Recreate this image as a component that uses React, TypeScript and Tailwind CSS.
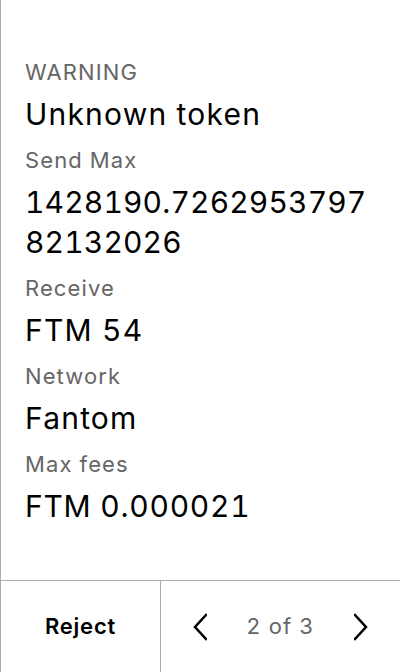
const rows = [
  { label: "WARNING", value: "Unknown token", track: "tracking-[0.04em]" },
  { label: "Send Max", value: "1428190.726295379782132026", track: "tracking-[0.005em]" },
  { label: "Receive", value: "FTM 54", track: "tracking-[0.04em]" },
  { label: "Network", value: "Fantom", track: "tracking-[0.04em]" },
  { label: "Max fees", value: "FTM 0.000021", track: "tracking-[0.025em]" },
];

function Chevron({ dir }: { dir: "left" | "right" }) {
  return (
    <svg width="14" height="28" viewBox="0 0 14 28" fill="none" stroke="currentColor" strokeWidth="2.5" strokeLinecap="square">
      {dir === "left" ? <polyline points="13,2 2,14 13,26" /> : <polyline points="1,2 12,14 1,26" />}
    </svg>
  );
}

export default function App() {
  return (
    <div className="flex h-[672px] w-[400px] flex-col border-l border-[#ababab] bg-white font-['Inter',sans-serif] text-black tabular-nums">
      <div className="flex-1 px-6 pt-[58px]">
        {rows.map((row, i) => (
          <div key={row.label} className={i > 0 ? "mt-3" : ""}>
            <p className="text-[22px] leading-[28px] tracking-[0.05em] text-[#666666]">{row.label}</p>
            <p className={`mt-2 break-all text-[30px] leading-[40px] ${row.track}`}>{row.value}</p>
          </div>
        ))}
      </div>

      <div className="flex h-[92px] border-t border-[#ababab]">
        <button className="w-[160px] border-r border-[#ababab] text-[22px] font-semibold tracking-[0.035em]">
          Reject
        </button>
        <div className="flex flex-1 items-center justify-between px-8">
          <button className="text-black">
            <Chevron dir="left" />
          </button>
          <span className="text-[22px] tracking-[0.05em] text-[#666666]">2 of 3</span>
          <button className="text-black">
            <Chevron dir="right" />
          </button>
        </div>
      </div>
    </div>
  );
}
